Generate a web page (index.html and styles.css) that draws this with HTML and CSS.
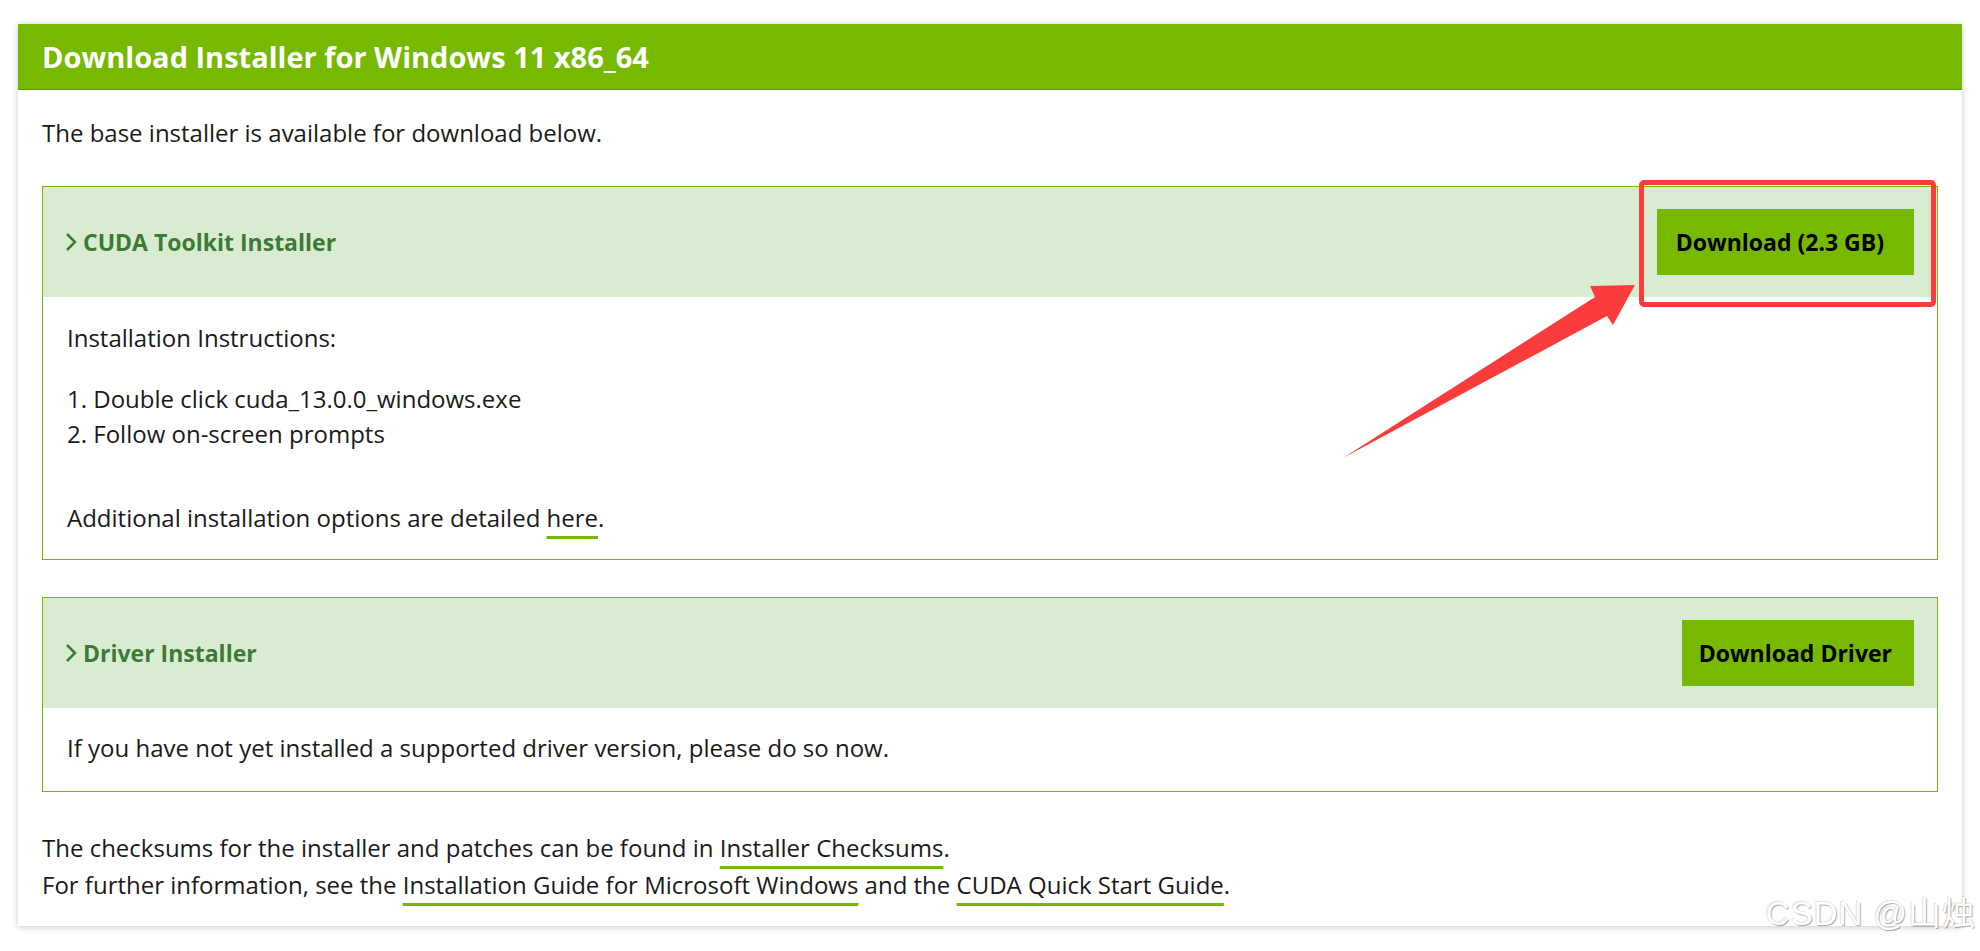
FILE: index.html
```html
<!DOCTYPE html>
<html lang="en">
<head>
    <meta charset="UTF-8">
    <meta name="viewport" content="width=device-width, initial-scale=1.0">
    <title>CUDA Toolkit - Download Installer for Windows</title>
    <link rel="stylesheet" href="styles.css">
</head>
<body>
    <div class="card">
        <div class="card-header">
            <h2 class="card-title">Download Installer for Windows 11 x86_64</h2>
        </div>

        <div class="card-body">
            <p class="intro">The base installer is available for download below.</p>

            <div class="installer">
                <div class="installer-head">
                    <h3 class="installer-title">
                        <svg class="chevron" viewBox="0 0 12 18" width="12" height="18">
                            <polyline points="2,1 10,9 2,17" fill="none" stroke="#3c7a36" stroke-width="2.5"/>
                        </svg>
                        CUDA Toolkit Installer
                    </h3>
                    <div class="btn-wrap">
                        <a class="btn btn-wide" href="#">Download (2.3 GB)</a>
                        <!-- annotation drawn over the screenshot -->
                        <span class="highlight"></span>
                        <svg class="arrow" viewBox="0 0 320 200" width="320" height="200">
                            <polygon points="6,189 258,28 253,17 298,16 276,56 270,47" fill="#fa3c3c"/>
                        </svg>
                    </div>
                </div>
                <div class="installer-body">
                    <p class="steps-label">Installation Instructions:</p>
                    <ol class="steps">
                        <li>Double click cuda_13.0.0_windows.exe</li>
                        <li>Follow on-screen prompts</li>
                    </ol>
                    <p class="extra">Additional installation options are detailed <a href="#">here</a>.</p>
                </div>
            </div>

            <div class="installer">
                <div class="installer-head">
                    <h3 class="installer-title">
                        <svg class="chevron" viewBox="0 0 12 18" width="12" height="18">
                            <polyline points="2,1 10,9 2,17" fill="none" stroke="#3c7a36" stroke-width="2.5"/>
                        </svg>
                        Driver Installer
                    </h3>
                    <a class="btn" href="#">Download Driver</a>
                </div>
                <div class="installer-body driver-body">
                    <p>If you have not yet installed a supported driver version, please do so now.</p>
                </div>
            </div>

            <p class="notes">
                The checksums for the installer and patches can be found in <a href="#">Installer Checksums</a>.<br>
                For further information, see the <a href="#">Installation Guide for Microsoft Windows</a> and the <a href="#">CUDA Quick Start Guide</a>.
            </p>
        </div>
    </div>

    <div class="watermark">CSDN @山烛</div>
</body>
</html>
```

FILE: styles.css
```css
/* General Styles */
body {
    font-family: 'Open Sans', 'Liberation Sans', Arial, sans-serif;
    margin: 0;
    padding: 24px 18px;
    background-color: #ffffff;
    color: #1a1a1a;
    font-size: 24px;
    line-height: 35px;
}

p {
    margin: 0;
}

a {
    color: inherit;
    text-decoration: underline;
    text-decoration-color: #76b900;
    text-decoration-thickness: 3px;
    text-underline-offset: 9px;
}

/* Card */
.card {
    position: relative;
    background: #ffffff;
    box-shadow: 0 1px 6px rgba(0, 0, 0, 0.22);
}

.card-header {
    height: 65px;
    display: flex;
    align-items: center;
    padding-left: 24px;
    background-color: #76b900;
    border-bottom: 1px solid #5f9800;
}

.card-title {
    margin: 0;
    color: #ffffff;
    font-size: 29px;
    font-weight: 700;
}

.card-body {
    padding: 25px 24px 23px;
}

.intro {
    margin-bottom: 36px;
}

/* Installer boxes */
.installer {
    border: 1px solid #76b900;
    margin-bottom: 37px;
}

.installer-head {
    display: flex;
    align-items: center;
    justify-content: space-between;
    padding: 22px 23px 22px 22px;
    background-color: #d9ecd2;
}

.installer-title {
    display: flex;
    align-items: center;
    gap: 6px;
    margin: 0;
    color: #3c7a36;
    font-size: 23px;
    font-weight: 700;
}

.chevron {
    flex-shrink: 0;
}

.btn-wrap {
    position: relative;
}

.btn {
    display: flex;
    align-items: center;
    height: 66px;
    padding: 0 22px 0 17px;
    background-color: #76b900;
    color: #000000;
    font-size: 23px;
    font-weight: 700;
    text-decoration: none;
}

.btn-wide {
    padding: 0 30px 0 19px;
}

.installer-body {
    padding: 23px 24px 24px;
}

.steps-label {
    margin-bottom: 26px;
}

.steps {
    margin: 0 0 49px;
    padding: 0;
    list-style-position: inside;
}

.driver-body {
    padding: 22px 24px 26px;
}

.notes {
    margin-top: 25px;
    line-height: 37px;
}

/* Annotation overlay */
.highlight {
    position: absolute;
    top: -29px;
    left: -18px;
    right: -22px;
    bottom: -32px;
    border: 5px solid #fa3c3c;
    border-radius: 5px;
}

.arrow {
    position: absolute;
    left: -320px;
    top: 60px;
}

.watermark {
    position: absolute;
    top: 894px;
    right: 4px;
    font-family: 'Liberation Sans', 'Noto Sans CJK SC', sans-serif;
    font-size: 33px;
    line-height: 40px;
    letter-spacing: 1px;
    color: #ffffff;
    text-shadow: 1px 1px 1px rgba(0, 0, 0, 0.35), -1px -1px 1px rgba(0, 0, 0, 0.12);
    white-space: nowrap;
}
```
